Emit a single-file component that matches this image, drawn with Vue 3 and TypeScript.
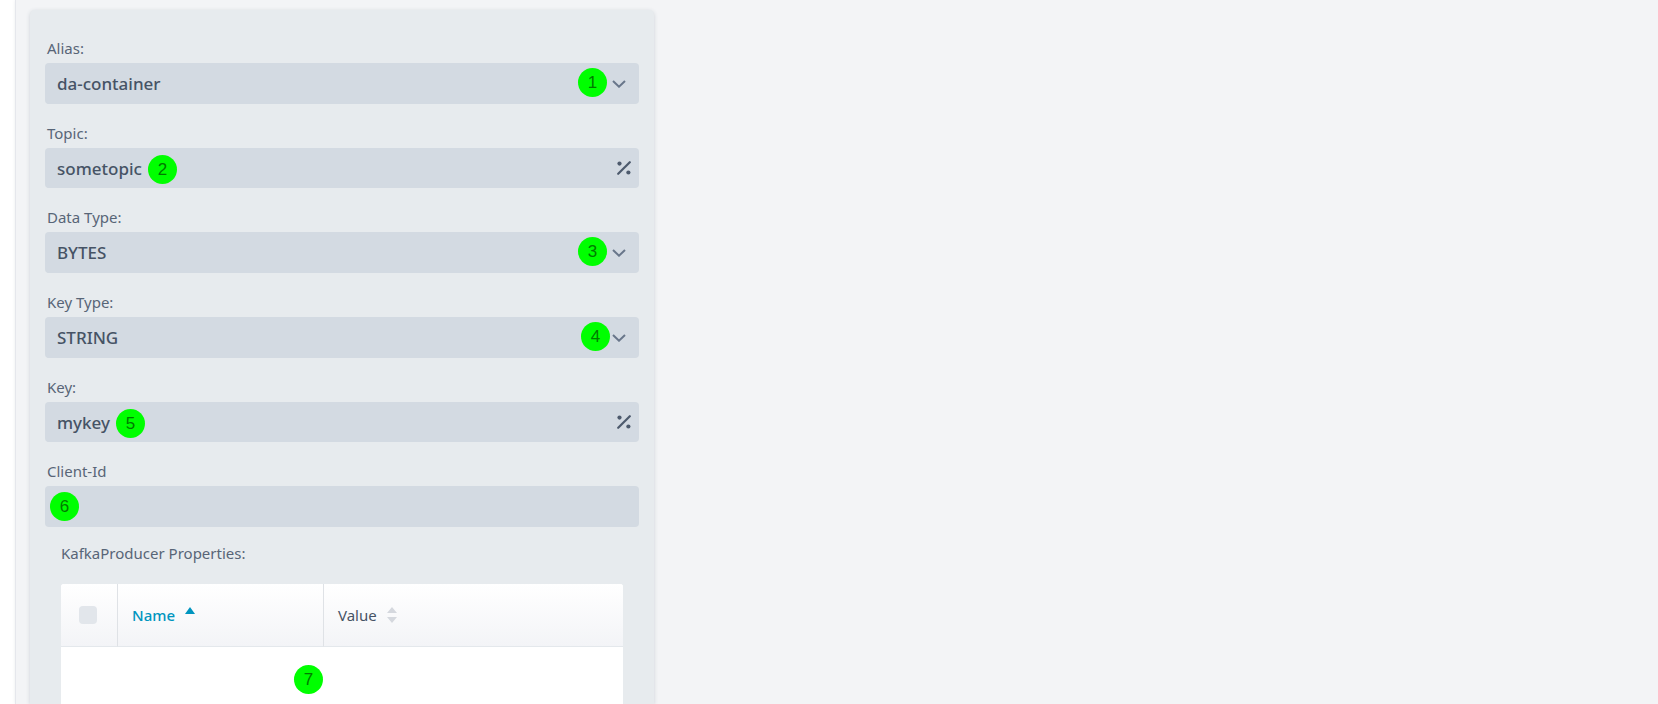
<script setup lang="ts">
import { ref } from 'vue'

interface Field {
  id: string
  label: string
  kind: 'select' | 'expression' | 'text'
  value: string
  step: number
}

const fields = ref<Field[]>([
  { id: 'alias', label: 'Alias:', kind: 'select', value: 'da-container', step: 1 },
  { id: 'topic', label: 'Topic:', kind: 'expression', value: 'sometopic', step: 2 },
  { id: 'data-type', label: 'Data Type:', kind: 'select', value: 'BYTES', step: 3 },
  { id: 'key-type', label: 'Key Type:', kind: 'select', value: 'STRING', step: 4 },
  { id: 'key', label: 'Key:', kind: 'expression', value: 'mykey', step: 5 },
  { id: 'client-id', label: 'Client-Id', kind: 'text', value: '', step: 6 },
])
const allSelected = ref(false)
</script>

<template>
  <div class="page">
    <main class="panel">
      <form class="card" @submit.prevent>
        <div v-for="field in fields" :key="field.id" class="field">
          <label class="label" :for="field.id">{{ field.label }}</label>
          <div class="control">
            <template v-if="field.kind === 'select'">
              <select :id="field.id" v-model="field.value" class="box select">
                <option>{{ field.value }}</option>
              </select>
              <svg class="chevron" viewBox="0 0 14 8" aria-hidden="true">
                <path d="M1 1l6 5.7L13 1" />
              </svg>
            </template>
            <template v-else>
              <input :id="field.id" v-model="field.value" class="box" :class="field.kind" type="text" />
              <button v-if="field.kind === 'expression'" class="expr" type="button" aria-label="Edit expression">
                <svg viewBox="0 0 14 14" aria-hidden="true">
                  <path d="M1.2 12.8L12.8 1.2" />
                  <circle cx="2.5" cy="2.6" r="2.1" />
                  <circle cx="11.4" cy="11.5" r="2.1" />
                </svg>
              </button>
            </template>
            <span class="badge" :class="`at-${field.id}`">{{ field.step }}</span>
          </div>
        </div>

        <section class="properties">
          <h2 id="properties-title" class="title">KafkaProducer Properties:</h2>
          <table class="grid" aria-labelledby="properties-title">
            <thead>
              <tr>
                <th class="pick"><input v-model="allSelected" class="tick" type="checkbox" aria-label="Select all" /></th>
                <th class="name" aria-sort="ascending">
                  <button class="sort active" type="button">
                    Name
                    <svg viewBox="0 0 10 16" aria-hidden="true"><path d="M5 0l5 7H0z" /></svg>
                  </button>
                </th>
                <th>
                  <button class="sort" type="button">
                    Value
                    <svg viewBox="0 0 10 16" aria-hidden="true"><path d="M5 0l5 6H0zM0 10h10l-5 6z" /></svg>
                  </button>
                </th>
              </tr>
            </thead>
            <tbody>
              <tr>
                <td colspan="3"><span class="badge at-table">7</span></td>
              </tr>
            </tbody>
          </table>
        </section>
      </form>
    </main>
  </div>
</template>

<style>
body {
  margin: 0;
}
</style>

<style scoped>
.page,
.page * {
  box-sizing: border-box;
}
.page {
  display: flex;
  min-height: 100vh;
  padding-left: 16px;
  background: #fff;
  color: #465365;
  font-family: "Noto Sans", "Open Sans", sans-serif;
  font-size: 15px;
  overflow-x: hidden;
}
.panel {
  display: flex;
  flex: 1;
  background: #f3f4f6;
  box-shadow: 0 0 0 1px #e5e7ec, 0 0 4px #dddfe3;
}
.card {
  width: 38%;
  min-width: 400px;
  margin: 10px 0 0 14px;
  padding: 25px 15px 0;
  border-radius: 5px 5px 0 0;
  background: #e7ebee;
  box-shadow: 0 1px 4px #cdd2d8;
}
.field {
  margin-bottom: 16px;
}
.label {
  display: block;
  height: 28px;
  padding-left: 2px;
  line-height: 26px;
  color: #586577;
}
.control {
  position: relative;
  display: flex;
}
.box {
  width: 100%;
  height: 41px;
  margin: 0;
  padding: 0 48px 0 12px;
  border: 0;
  border-radius: 4px;
  background: #d3dae2;
  color: inherit;
  font: 500 17px "Noto Sans", "Open Sans", sans-serif;
  appearance: none;
}
.expression {
  height: 40px;
}
.chevron {
  position: absolute;
  top: 17px;
  right: 13px;
  width: 14px;
  height: 8px;
  fill: none;
  stroke: #68768a;
  stroke-width: 2;
  pointer-events: none;
}
.expr {
  position: absolute;
  top: 9px;
  right: 4px;
  display: flex;
  padding: 4px;
  border: 0;
  background: none;
}
.expr svg {
  width: 14px;
  height: 14px;
  fill: #4d5a6d;
}
.expr path {
  stroke: #4d5a6d;
  stroke-width: 2.2;
  stroke-linecap: round;
}
.badge {
  position: absolute;
  top: 6px;
  width: 29px;
  height: 29px;
  border-radius: 50%;
  background: #0f0;
  color: #007a00;
  font: 17px/29px "Liberation Sans", Arial, sans-serif;
  text-align: center;
  pointer-events: none;
}
.at-alias {
  top: 5px;
  right: 32px;
}
.at-topic {
  top: 7px;
  left: 103px;
}
.at-data-type {
  top: 5px;
  right: 32px;
}
.at-key-type {
  top: 5px;
  right: 29px;
}
.at-key {
  top: 7px;
  left: 71px;
}
.at-client-id {
  left: 5px;
}
.at-table {
  top: 18px;
  left: 233px;
}
.properties {
  padding: 0 16px;
}
.title {
  margin: 0;
  height: 41px;
  font-size: 15px;
  font-weight: 400;
  line-height: 20px;
  color: #586577;
}
.grid {
  width: 100%;
  border-collapse: separate;
  border-spacing: 0;
  table-layout: fixed;
  border-radius: 3px 3px 0 0;
  background: #fff;
  overflow: hidden;
}
thead {
  background: linear-gradient(#fff, #f3f4f7);
}
th {
  height: 63px;
  padding: 0 14px;
  border-bottom: 1px solid #e4e8ec;
  text-align: left;
  vertical-align: middle;
}
th + th {
  border-left: 1px solid #dfe2e6;
}
.pick {
  width: 56px;
  padding: 0 0 0 18px;
}
.name {
  width: 206px;
}
.tick {
  display: block;
  width: 18px;
  height: 18px;
  margin: 0;
  border-radius: 4px;
  background: #e2e6eb;
  appearance: none;
}
.tick:checked {
  background: #0095bf;
}
.sort {
  display: flex;
  align-items: center;
  gap: 10px;
  padding: 0;
  border: 0;
  background: none;
  color: inherit;
  font: 400 15px/20px "Noto Sans", "Open Sans", sans-serif;
}
.sort svg {
  width: 10px;
  height: 16px;
  fill: #d5d8de;
}
.active {
  color: #0095bf;
  font-weight: 500;
}
.active svg {
  fill: #0095bf;
}
td {
  position: relative;
  height: 57px;
  padding: 0;
}
</style>
